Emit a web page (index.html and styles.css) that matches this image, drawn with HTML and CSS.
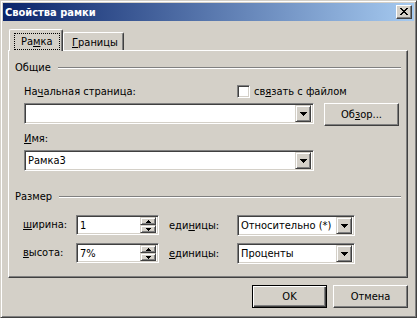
FILE: index.html
```html
<!DOCTYPE html>
<html lang="ru">
<head>
<meta charset="utf-8">
<title>Свойства рамки</title>
<link rel="stylesheet" href="styles.css">
</head>
<body>
<div class="window">
  <div class="titlebar">
    <span class="title">Свойства рамки</span>
    <span class="close-btn">
      <svg width="8" height="7" viewBox="0 0 8 7" shape-rendering="crispEdges"><rect x="0" y="0" width="2" height="1"/><rect x="6" y="0" width="2" height="1"/><rect x="1" y="1" width="2" height="1"/><rect x="5" y="1" width="2" height="1"/><rect x="2" y="2" width="4" height="1"/><rect x="3" y="3" width="2" height="1"/><rect x="2" y="4" width="4" height="1"/><rect x="1" y="5" width="2" height="1"/><rect x="5" y="5" width="2" height="1"/><rect x="0" y="6" width="2" height="1"/><rect x="6" y="6" width="2" height="1"/></svg>
    </span>
  </div>
  <div class="client">
    <div class="tabs">
      <div class="tab active"><span class="focus">Ра<u>м</u>ка</span></div>
      <div class="tab"><u>Г</u>раницы</div>
    </div>
    <div class="panel">
      <div class="group-head"><span>Общие</span><span class="etch"></span></div>
      <div class="group-body">
        <div class="row-labels">
          <span class="lbl-start">На<u>ч</u>альная страница:</span>
          <span class="checkbox"></span>
          <span class="chk-label">св<u>я</u>зать с файлом</span>
        </div>
        <div class="row-combo">
          <div class="combo combo-wide"><span class="combo-text"></span><span class="drop-btn"><svg width="7" height="4" viewBox="0 0 7 4" shape-rendering="crispEdges"><rect x="0" y="0" width="7" height="1"/><rect x="1" y="1" width="5" height="1"/><rect x="2" y="2" width="3" height="1"/><rect x="3" y="3" width="1" height="1"/></svg></span></div>
          <div class="button">Об<u>з</u>ор...</div>
        </div>
        <div class="row-label2"><u>И</u>мя:</div>
        <div class="row-combo2">
          <div class="combo combo-wide"><span class="combo-text">Рамка3</span><span class="drop-btn"><svg width="7" height="4" viewBox="0 0 7 4" shape-rendering="crispEdges"><rect x="0" y="0" width="7" height="1"/><rect x="1" y="1" width="5" height="1"/><rect x="2" y="2" width="3" height="1"/><rect x="3" y="3" width="1" height="1"/></svg></span></div>
        </div>
      </div>
      <div class="group-head group-head2"><span>Размер</span><span class="etch"></span></div>
      <div class="group-body">
        <div class="size-row">
          <span class="size-lbl"><u>ш</u>ирина:</span>
          <div class="spin"><span class="spin-text">1</span><span class="spin-btns"><span class="spin-btn"><svg width="5" height="3" viewBox="0 0 5 3" shape-rendering="crispEdges"><rect x="2" y="0" width="1" height="1"/><rect x="1" y="1" width="3" height="1"/><rect x="0" y="2" width="5" height="1"/></svg></span><span class="spin-btn"><svg width="5" height="3" viewBox="0 0 5 3" shape-rendering="crispEdges"><rect x="0" y="0" width="5" height="1"/><rect x="1" y="1" width="3" height="1"/><rect x="2" y="2" width="1" height="1"/></svg></span></span></div>
          <span class="unit-lbl">еди<u>н</u>ицы:</span>
          <div class="combo combo-unit"><span class="combo-text">Относительно (*)</span><span class="drop-btn"><svg width="7" height="4" viewBox="0 0 7 4" shape-rendering="crispEdges"><rect x="0" y="0" width="7" height="1"/><rect x="1" y="1" width="5" height="1"/><rect x="2" y="2" width="3" height="1"/><rect x="3" y="3" width="1" height="1"/></svg></span></div>
        </div>
        <div class="size-row size-row2">
          <span class="size-lbl"><u>в</u>ысота:</span>
          <div class="spin"><span class="spin-text">7%</span><span class="spin-btns"><span class="spin-btn"><svg width="5" height="3" viewBox="0 0 5 3" shape-rendering="crispEdges"><rect x="2" y="0" width="1" height="1"/><rect x="1" y="1" width="3" height="1"/><rect x="0" y="2" width="5" height="1"/></svg></span><span class="spin-btn"><svg width="5" height="3" viewBox="0 0 5 3" shape-rendering="crispEdges"><rect x="0" y="0" width="5" height="1"/><rect x="1" y="1" width="3" height="1"/><rect x="2" y="2" width="1" height="1"/></svg></span></span></div>
          <span class="unit-lbl"><u>е</u>диницы:</span>
          <div class="combo combo-unit"><span class="combo-text">Проценты</span><span class="drop-btn"><svg width="7" height="4" viewBox="0 0 7 4" shape-rendering="crispEdges"><rect x="0" y="0" width="7" height="1"/><rect x="1" y="1" width="5" height="1"/><rect x="2" y="2" width="3" height="1"/><rect x="3" y="3" width="1" height="1"/></svg></span></div>
        </div>
      </div>
    </div>
    <div class="dialog-buttons">
      <div class="button default">OK</div>
      <div class="button">Отмена</div>
    </div>
  </div>
</div>
</body>
</html>
```
FILE: styles.css
```css
* { box-sizing: border-box; }
html, body { margin: 0; padding: 0; background: #d4d0c8; }
body {
  font-family: "DejaVu Sans Condensed", "DejaVu Sans", sans-serif;
  font-size: 11px;
  color: #000;
}
u { text-decoration: underline; text-underline-offset: 1px; }

.window {
  width: 417px;
  height: 318px;
  background: #d4d0c8;
  border: 1px solid;
  border-color: #d4d0c8 #404040 #404040 #d4d0c8;
  box-shadow: inset 1px 1px #fff, inset -1px -1px #808080;
  padding: 2px;
  display: flex;
  flex-direction: column;
}

.titlebar {
  height: 18px;
  flex: none;
  background: linear-gradient(to right, #0a246a, #a6caf0);
  display: flex;
  align-items: center;
  justify-content: space-between;
  padding: 0 2px 0 2px;
}
.title {
  color: #fff;
  font-weight: bold;
  font-size: 11px;
  line-height: 13px;
}
.close-btn {
  width: 16px;
  height: 14px;
  background: #d4d0c8;
  border: 1px solid;
  border-color: #fff #404040 #404040 #fff;
  box-shadow: inset -1px -1px #808080;
  display: flex;
  align-items: center;
  justify-content: center;
  padding-bottom: 1px;
}
.close-btn svg { fill: #000; display: block; }

.client {
  padding: 8px 0 0 5px;
  display: flex;
  flex-direction: column;
}

.tabs {
  display: flex;
  align-items: flex-end;
  height: 21px;
  padding-left: 1px;
}
.tab {
  height: 18px;
  background: #d4d0c8;
  border-top: 1px solid #fff;
  border-left: 1px solid #fff;
  border-right: 1px solid #404040;
  box-shadow: inset -1px 0 #808080;
  border-radius: 2px 2px 0 0;
  display: flex;
  align-items: center;
  padding: 0 8px 0 8px;
  line-height: 13px;
}
.tab:not(.active) { width: 61px; padding-top: 1px; }
.tab.active {
  height: 22px;
  width: 54px;
  margin-bottom: -1px;
  position: relative;
  z-index: 1;
  padding: 0 2px 0 4px;
}
.focus {
  border: 1px dotted #000;
  width: 47px;
  height: 17px;
  display: flex;
  align-items: center;
  padding-left: 6px;
  margin-top: 1px;
}

.panel {
  width: 400px;
  height: 228px;
  border: 1px solid;
  border-color: #fff #404040 #404040 #fff;
  box-shadow: inset -1px -1px #808080;
  padding: 10px 6px 0 6px;
}

.group-head {
  display: flex;
  align-items: center;
  height: 13px;
  line-height: 13px;
}
.group-head2 { margin-top: 19px; }
.etch {
  flex: 1;
  height: 2px;
  border-top: 1px solid #808080;
  border-bottom: 1px solid #fff;
  margin-left: 7px;
}

.group-body { padding-left: 9px; }

.row-labels {
  margin-top: 11px;
  height: 13px;
  display: flex;
  align-items: center;
  line-height: 13px;
}
.lbl-start { width: 213px; }
.checkbox {
  width: 13px;
  height: 13px;
  background: #fff;
  border: 1px solid;
  border-color: #808080 #fff #fff #808080;
  box-shadow: inset 1px 1px #404040, inset -1px -1px #d4d0c8;
  margin-right: 4px;
}

.row-combo {
  margin-top: 5px;
  display: flex;
  align-items: flex-start;
  gap: 10px;
  height: 23px;
}
.row-label2 {
  margin-top: 6px;
  height: 13px;
  line-height: 13px;
}
.row-combo2 { margin-top: 5px; height: 21px; }

.combo {
  height: 21px;
  background: #fff;
  border: 1px solid;
  border-color: #808080 #fff #fff #808080;
  box-shadow: inset 1px 1px #404040, inset -1px -1px #d4d0c8;
  padding: 2px;
  display: flex;
  align-items: center;
}
.combo-wide { width: 290px; }
.combo-unit { width: 118px; }
.combo-text { flex: 1; padding-left: 1px; line-height: 13px; white-space: nowrap; }
.drop-btn {
  width: 16px;
  height: 17px;
  flex: none;
  background: #d4d0c8;
  border: 1px solid;
  border-color: #d4d0c8 #404040 #404040 #d4d0c8;
  box-shadow: inset 1px 1px #fff, inset -1px -1px #808080;
  display: flex;
  align-items: center;
  justify-content: center;
}
.drop-btn svg { fill: #000; display: block; }

.button {
  width: 75px;
  height: 23px;
  background: #d4d0c8;
  border: 1px solid;
  border-color: #fff #404040 #404040 #fff;
  box-shadow: inset -1px -1px #808080;
  display: flex;
  align-items: center;
  justify-content: center;
  line-height: 13px;
}
.button.default {
  border-color: #000;
  box-shadow: inset 1px 1px #fff, inset -1px -1px #404040, inset -2px -2px #808080;
}

.size-row {
  margin-top: 12px;
  display: flex;
  align-items: flex-start;
  height: 21px;
}
.size-row2 { margin-top: 7px; }
.size-lbl { width: 53px; line-height: 20px; margin-left: -1px; padding-left: 0; }
.unit-lbl { width: 68px; margin-left: 10px; line-height: 21px; }

.spin {
  width: 83px;
  height: 20px;
  background: #fff;
  border: 1px solid;
  border-color: #808080 #fff #fff #808080;
  box-shadow: inset 1px 1px #404040, inset -1px -1px #d4d0c8;
  padding: 2px;
  display: flex;
  align-items: center;
}
.spin-text { flex: 1; padding-left: 1px; line-height: 13px; }
.spin-btns { display: flex; flex-direction: column; width: 16px; height: 16px; }
.spin-btn {
  height: 8px;
  background: #d4d0c8;
  border: 1px solid;
  border-color: #d4d0c8 #404040 #404040 #d4d0c8;
  box-shadow: inset 1px 1px #fff, inset -1px -1px #808080;
  display: flex;
  align-items: center;
  justify-content: center;
}
.spin-btn svg { fill: #000; display: block; }

.dialog-buttons {
  margin-top: 7px;
  width: 400px;
  display: flex;
  justify-content: flex-end;
  gap: 6px;
}
```
